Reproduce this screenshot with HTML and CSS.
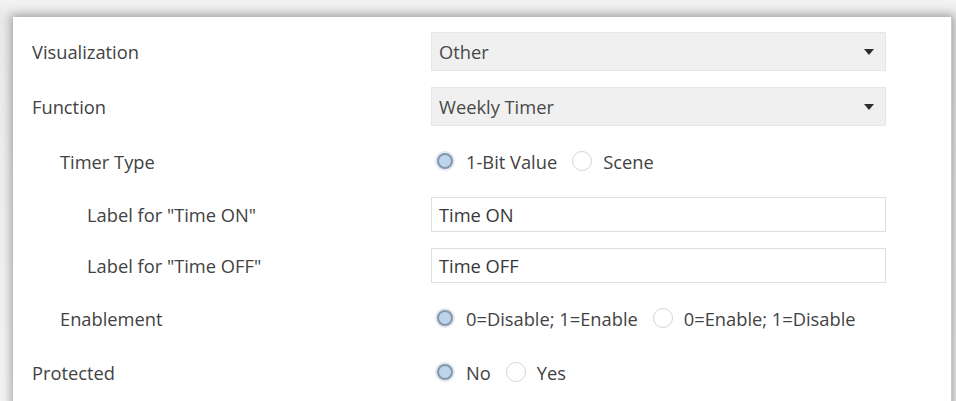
FILE: index.html
```html
<!DOCTYPE html>
<html>
<head>
<meta charset="utf-8">
<link rel="stylesheet" href="styles.css">
</head>
<body>
<div class="panel">
  <div class="form">
    <div class="label lvl0">Visualization</div>
    <div class="control"><div class="select"><span>Other</span><span class="caret"></span></div></div>

    <div class="label lvl0">Function</div>
    <div class="control"><div class="select"><span>Weekly Timer</span><span class="caret"></span></div></div>

    <div class="label lvl1">Timer Type</div>
    <div class="control radios">
      <label class="opt"><span class="radio on"></span>1-Bit Value</label>
      <label class="opt"><span class="radio"></span>Scene</label>
    </div>

    <div class="label lvl2">Label for "Time ON"</div>
    <div class="control"><div class="input">Time ON</div></div>

    <div class="label lvl2">Label for "Time OFF"</div>
    <div class="control"><div class="input">Time OFF</div></div>

    <div class="label lvl1">Enablement</div>
    <div class="control radios">
      <label class="opt"><span class="radio on"></span>0=Disable; 1=Enable</label>
      <label class="opt"><span class="radio"></span>0=Enable; 1=Disable</label>
    </div>

    <div class="label lvl0">Protected</div>
    <div class="control radios">
      <label class="opt"><span class="radio on"></span>No</label>
      <label class="opt"><span class="radio"></span>Yes</label>
    </div>
  </div>
</div>
</body>
</html>
```
FILE: styles.css
```css
html, body {
  margin: 0;
  padding: 0;
  height: 100%;
  overflow: hidden;
}
body {
  background: linear-gradient(#f3f3f3, #e9e9e9 14px, #f3f3f3);
  font-family: "Open Sans", "Liberation Sans", sans-serif;
  font-size: 18.3px;
  color: #424242;
}
.panel {
  margin: 17px 4px 0 13px;
  height: 420px;
  background: #fff;
  box-shadow: 0 0 9px 2px rgba(0, 0, 0, 0.32);
  border-right: 1px solid #c8c8c8;
}
.form {
  display: grid;
  grid-template-columns: 418px 455px;
  grid-template-rows: 55px 55px 54px 52px 50px 56px 52px;
  padding-top: 7px;
  align-items: center;
}
.label {
  white-space: nowrap;
}
.lvl0 { padding-left: 19px; }
.lvl1 { padding-left: 47px; }
.lvl2 { padding-left: 74px; }
.select {
  height: 39px;
  box-sizing: border-box;
  background: #f0f0f0;
  border: 1px solid #e6e6e6;
  display: flex;
  align-items: center;
  justify-content: space-between;
  padding: 0 11px 0 7px;
  color: #484848;
}
.caret {
  width: 0;
  height: 0;
  border-left: 5.5px solid transparent;
  border-right: 5.5px solid transparent;
  border-top: 6px solid #2e2e2e;
}
.input {
  height: 35px;
  box-sizing: border-box;
  background: #fff;
  border: 1px solid #dedede;
  display: flex;
  align-items: center;
  padding: 0 7px;
  color: #383838;
}
.radios {
  display: flex;
  align-items: center;
  gap: 15px;
  padding-left: 4px;
}
.opt {
  display: flex;
  align-items: center;
  white-space: nowrap;
}
.radio {
  width: 20px;
  height: 20px;
  box-sizing: border-box;
  border-radius: 50%;
  border: 1px solid #d6d6d6;
  background: #fff;
  margin-right: 11px;
}
.radio.on {
  border: 2px solid #8797aa;
  background: #bcd4ec;
  box-shadow: 0 0 0 2px #e2e8ef;
  width: 16px;
  height: 16px;
  margin: 0 13px 0 2px;
}
```
